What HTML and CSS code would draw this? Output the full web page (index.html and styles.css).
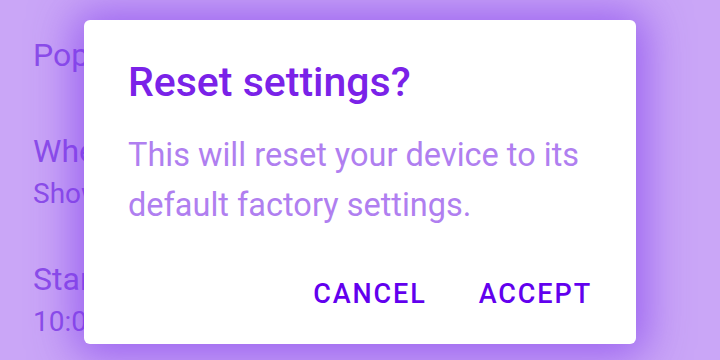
FILE: index.html
```html
<!DOCTYPE html>
<html lang="en">
<head>
<meta charset="utf-8">
<title>Reset settings</title>
<link rel="stylesheet" href="styles.css">
</head>
<body>
<main class="screen">
  <ul class="settings">
    <li class="item item-single"><span class="item-title">Pop-up notifications</span></li>
    <li class="item"><span class="item-title">When device is locked</span><span class="item-sub">Show all notification content</span></li>
    <li class="item"><span class="item-title">Start time</span><span class="item-sub">10:00 PM</span></li>
  </ul>
  <section class="dialog" role="dialog" aria-labelledby="dlg-title">
    <h2 class="dialog-title" id="dlg-title">Reset settings?</h2>
    <p class="dialog-body">This will reset your device to its default factory settings.</p>
    <div class="dialog-actions">
      <button class="btn" type="button">Cancel</button>
      <button class="btn" type="button">Accept</button>
    </div>
  </section>
</main>
</body>
</html>
```

FILE: styles.css
```css
* { box-sizing: border-box; }
html, body {
  margin: 0;
  padding: 0;
}
body {
  width: 720px;
  height: 360px;
  overflow: hidden;
  font-family: Roboto, "Noto Sans", "Liberation Sans", sans-serif;
  background: #caa6f7;
}
.screen {
  position: relative;
  width: 720px;
  height: 360px;
  overflow: hidden;
}
.settings {
  list-style: none;
  margin: 0;
  width: 84px;
  overflow: hidden;
  padding: 36px 0 0 33px;
  display: flex;
  flex-direction: column;
  gap: 49px;
  color: #8b4de9;
}
.item {
  display: flex;
  flex-direction: column;
  gap: 7px;
}
.item-single {
  margin-bottom: 9px;
}
.item-title {
  font-size: 32px;
  line-height: 38px;
  white-space: nowrap;
}
.item-sub {
  font-size: 28px;
  line-height: 34px;
  white-space: nowrap;
}
.dialog {
  position: absolute;
  left: 84px;
  top: 20px;
  width: 552px;
  height: 324px;
  background: #ffffff;
  border-radius: 6px;
  padding: 38px 44px 0 44px;
  box-shadow: 0 2px 44px 10px rgba(125, 55, 235, 0.62);
  display: flex;
  flex-direction: column;
}
.dialog-title {
  margin: 0;
  font-size: 41px;
  line-height: 48px;
  font-weight: 500;
  color: #7a22e8;
}
.dialog-body {
  margin: 24px 0 0 0;
  font-size: 32.5px;
  line-height: 50px;
  font-weight: 400;
  color: #b07ff0;
}
.dialog-actions {
  margin-top: 46px;
  display: flex;
  justify-content: flex-end;
  gap: 52px;
}
.btn {
  font-family: inherit;
  font-size: 27px;
  line-height: 36px;
  font-weight: 500;
  letter-spacing: 1.9px;
  text-transform: uppercase;
  color: #6200ee;
  background: none;
  border: 0;
  padding: 0;
  margin: 0;
}
```
